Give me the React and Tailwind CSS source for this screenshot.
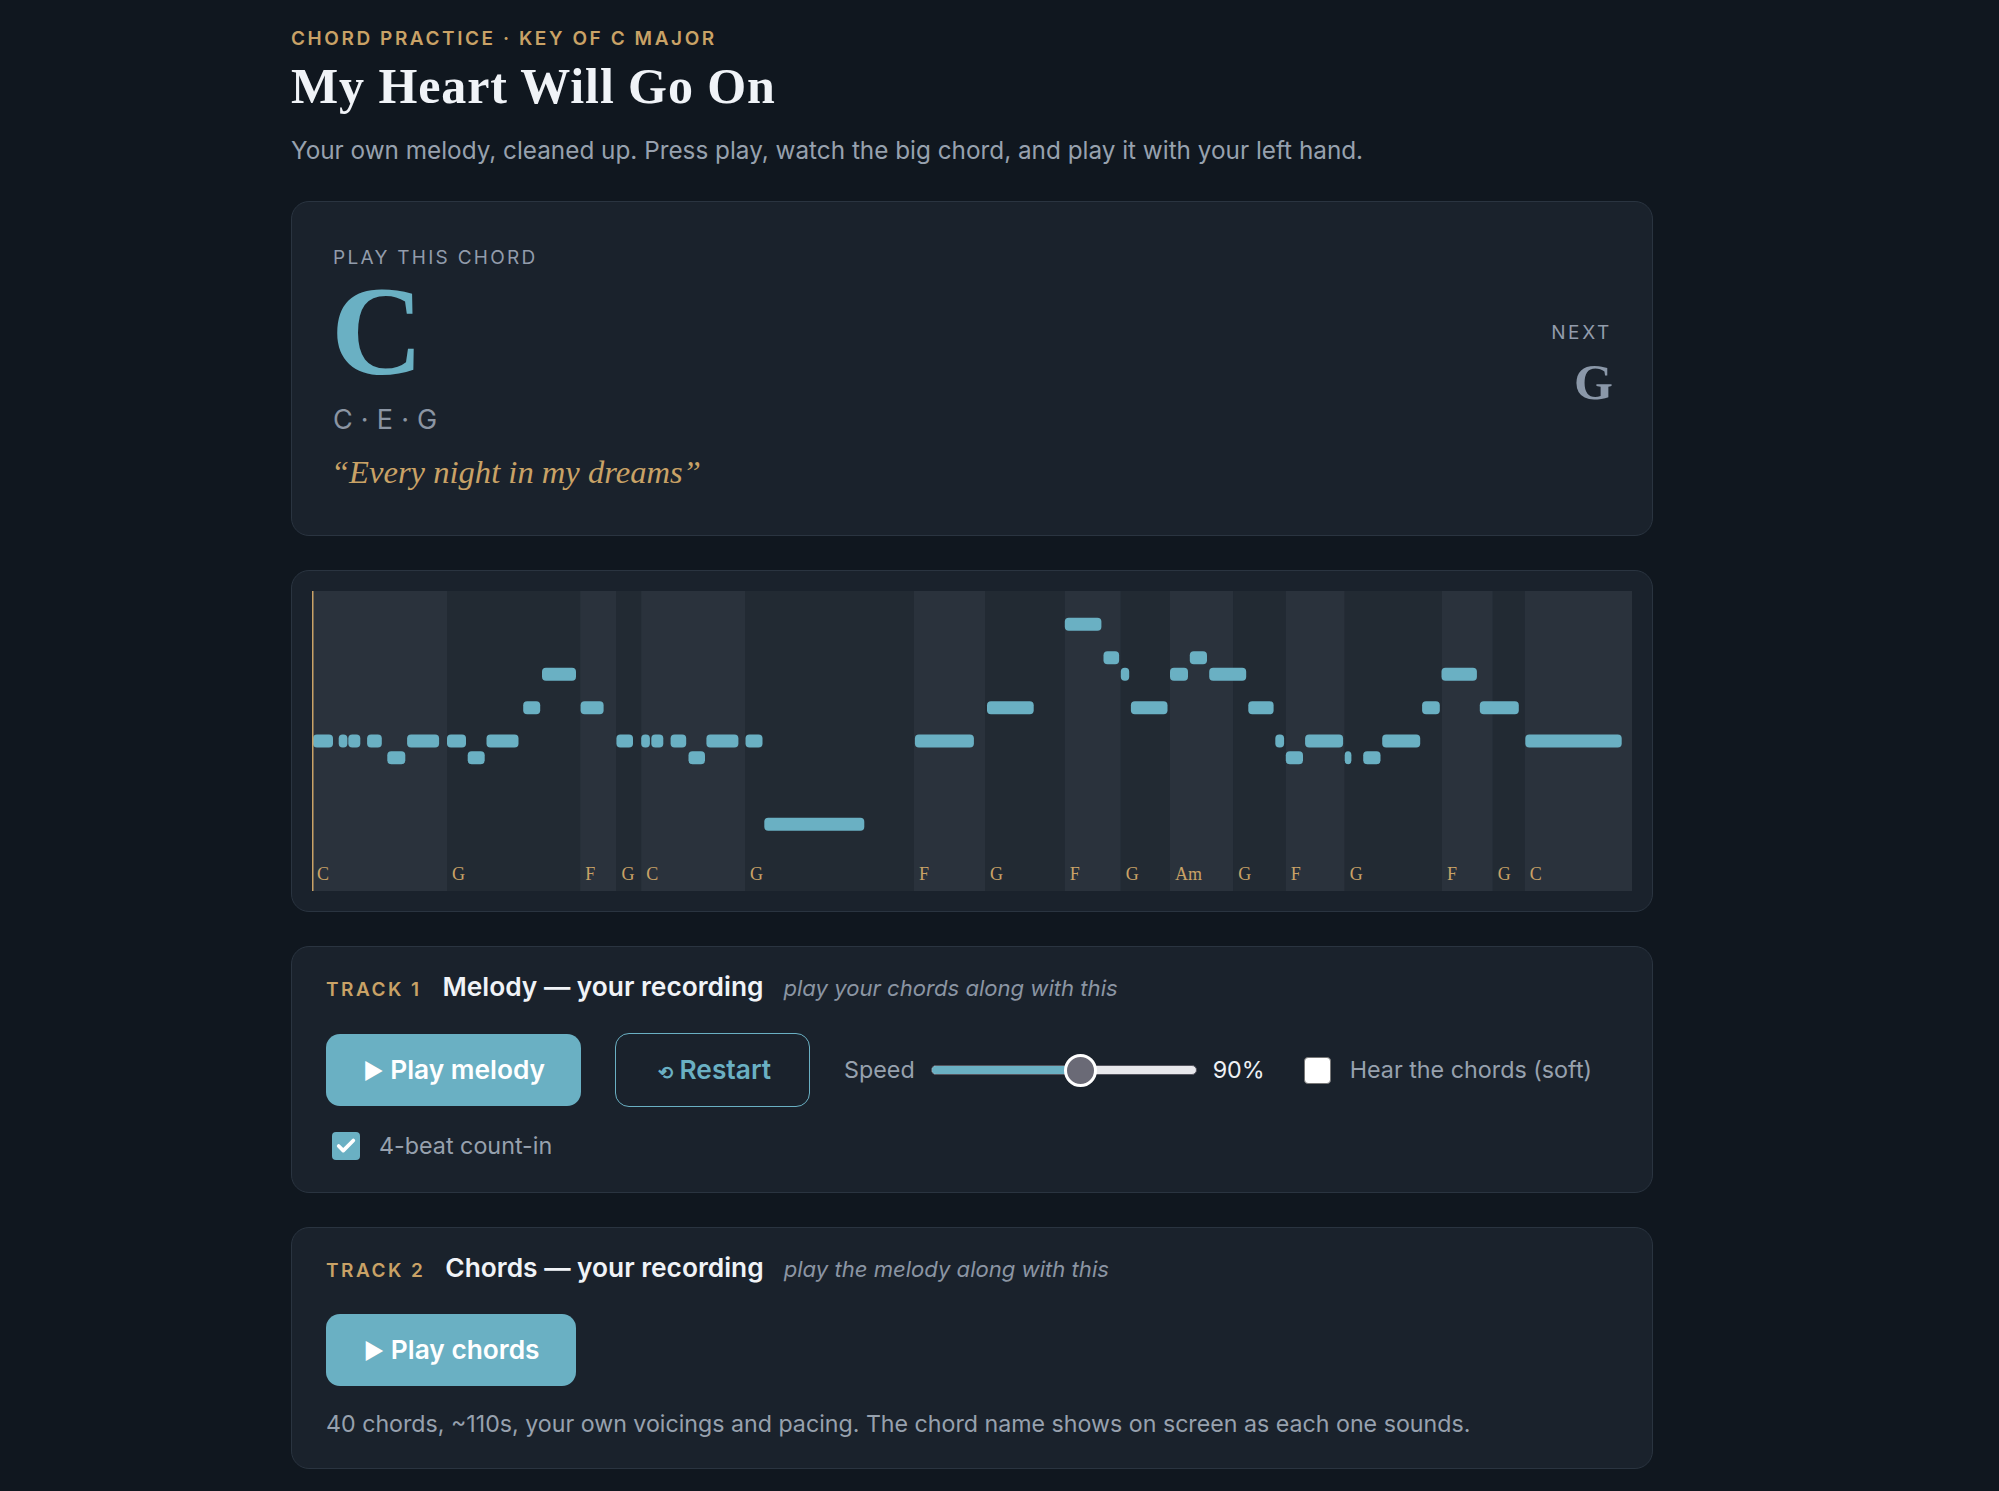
import { Check } from 'lucide-react';

const bands = [
  ['C', 0, 135], ['G', 135, 268.2], ['F', 268.2, 304.4], ['G', 304.4, 329.2], ['C', 329.2, 433],
  ['G', 433, 602], ['F', 602, 673], ['G', 673, 752.8], ['F', 752.8, 808.8], ['G', 808.8, 858],
  ['Am', 858, 921.2], ['G', 921.2, 973.8], ['F', 973.8, 1032.7], ['G', 1032.7, 1130],
  ['F', 1130, 1180.8], ['G', 1180.8, 1212.8], ['C', 1212.8, 1320],
];

// x, width, row centre
const notes = [
  [1, 20, 150], [26.7, 8.7, 150], [36.3, 12, 150], [55.1, 14.7, 150], [95.1, 32, 150], [135, 19, 150],
  [174.5, 32, 150], [304.4, 16.6, 150], [329.2, 8.7, 150], [339.3, 12, 150], [358.6, 15.6, 150],
  [394.4, 32, 150], [433.5, 17, 150], [602.9, 59, 150],
  [75.3, 18, 166.7], [155.7, 17, 166.7], [376.5, 16.5, 166.7],
  [211.2, 17, 116.7], [268.6, 23, 116.7], [675, 46.7, 116.7],
  [230, 34, 83.3], [452.3, 100, 233.3],
  [752.8, 36.6, 33.3], [791.5, 15.6, 66.7], [877.8, 17.2, 66.7],
  [808.8, 8.4, 83.3], [858, 18, 83.3], [897.2, 37, 83.3], [1129.5, 35.4, 83.3],
  [818.9, 36.6, 116.7], [936.3, 25.3, 116.7], [1110.1, 17.7, 116.7], [1167.8, 39, 116.7],
  [963.3, 8.8, 150], [993.1, 38, 150], [1070.2, 38, 150], [1213.3, 96.4, 150],
  [973.8, 17.2, 166.7], [1032.7, 6.7, 166.7], [1051.2, 17.3, 166.7],
];

function PianoRoll() {
  return (
    <svg width="1320" height="300" viewBox="0 0 1320 300" className="block">
      <rect width="1320" height="300" fill="#222a33" />
      {bands.map(([name, start, end], i) => (
        <rect key={i} x={start} y="0" width={end - start} height="300" fill={i % 2 === 0 ? '#2a323c' : '#222a33'} />
      ))}
      {notes.map(([x, w, y], i) => (
        <rect key={i} x={x} y={y - 6.5} width={w} height="13" rx="4" fill="#6ab0c3" />
      ))}
      {bands.map(([name, start], i) => (
        <text key={i} x={start + 5} y="289" fill="#c9a266" fontSize="18" fontFamily="'Liberation Serif', serif">{name}</text>
      ))}
      <rect x="0" y="0" width="1.5" height="300" fill="#c9a266" />
    </svg>
  );
}

function TrackHeader({ track, title, note, gap }) {
  return (
    <div className="flex items-baseline mb-[28px] leading-[30px]">
      <span className="text-[19px] font-semibold tracking-[0.13em] text-[#c9a266]">{track}</span>
      <span className={`text-[26.3px] font-semibold text-[#f0f3f7] ${gap}`}>{title}</span>
      <span className="ml-[20px] text-[22.1px] italic text-[#8b95a3]">{note}</span>
    </div>
  );
}

export default function App() {
  return (
    <div className="min-h-screen bg-[#10171f] font-['Inter',sans-serif] pt-[27px] pb-[22px]">
      <div className="ml-[291px] w-[1362px]">
        <div className="text-[19px] leading-[24px] font-semibold tracking-[0.135em] text-[#c9a266]">
          CHORD PRACTICE · KEY OF C MAJOR
        </div>
        <h1 className="mt-[7px] font-['Liberation_Serif',serif] text-[50px] leading-[56px] font-bold tracking-[0.9px] text-[#f0f3f7]">
          My Heart Will Go On
        </h1>
        <p className="mt-[20px] text-[24.3px] leading-[32px] text-[#97a1ae]">
          Your own melody, cleaned up. Press play, watch the big chord, and play it with your left hand.
        </p>

        <section className="mt-[35px] h-[335px] rounded-[18px] border border-[#2a3440] bg-[#1a222c] px-[41px] flex items-center justify-between">
          <div className="mt-[1px]">
            <div className="text-[19px] leading-[24px] tracking-[0.12em] text-[#929cab]">PLAY THIS CHORD</div>
            <div className="ml-[-2px] font-['Liberation_Serif',serif] text-[128px] leading-[112px] mt-[5px] font-bold text-[#6ab0c3]">C</div>
            <div className="mt-[17px] text-[27px] leading-[32px] tracking-[0.01em] text-[#8b95a3]">C · E · G</div>
            <div className="ml-[-2px] mt-[16px] font-['Liberation_Serif',serif] text-[32.6px] leading-[40px] italic text-[#c9a266]">
              “Every night in my dreams”
            </div>
          </div>
          <div className="mb-[7px] text-right">
            <div className="mr-[-1px] text-[19px] leading-[24px] tracking-[0.14em] text-[#929cab]">NEXT</div>
            <div className="mt-[10px] mr-[-2px] font-['Liberation_Serif',serif] text-[50px] leading-[54px] font-bold text-[#8b98a9]">G</div>
          </div>
        </section>

        <section className="mt-[34px] rounded-[18px] border border-[#2a3440] bg-[#1a222c] p-5">
          <PianoRoll />
        </section>

        <section className="mt-[34px] rounded-[18px] border border-[#2a3440] bg-[#1a222c] px-[34px] pt-[25px] pb-[32px]">
          <TrackHeader track="TRACK 1" title="Melody — your recording" note="play your chords along with this" gap="ml-[21px]" />
          <div className="flex flex-wrap items-center gap-x-[34px] gap-y-[25px]">
            <button className="h-[72px] w-[255px] rounded-[14px] bg-[#6ab0c3] pl-[1px] text-[26.3px] font-semibold text-white">
              <span className="text-[22px]">▶</span> Play melody
            </button>
            <button className="h-[74px] w-[195px] rounded-[14px] border-[1.5px] border-[#6ab0c3] pl-[4px] text-[26.3px] font-semibold text-[#6ab0c3]">
              <span className="text-[18px]">⟲</span> Restart
            </button>
            <div className="flex items-center gap-[16px] text-[23.3px] text-[#97a1ae]">
              <span>Speed</span>
              <div className="relative h-[10px] w-[266px] rounded-full bg-[#e8e8ec] border border-[#55555f]">
                <div className="h-full w-[52%] rounded-full bg-[#6ab0c3]" />
                <div className="absolute left-[132px] top-[-12px] h-[33px] w-[33px] rounded-full border-[3px] border-white bg-[#6a6a76]" />
              </div>
              <span className="text-[#eef1f5]">90%</span>
            </div>
            <label className="ml-[5px] flex items-center gap-[19px] text-[23.3px] text-[#97a1ae]">
              <span className="h-[27px] w-[27px] rounded-[4px] border border-[#777] bg-white" />
              Hear the chords (soft)
            </label>
            <label className="ml-[6px] flex items-center gap-[19px] text-[23.3px] leading-[28px] text-[#97a1ae]">
              <span className="flex h-[28px] w-[28px] items-center justify-center rounded-[4px] bg-[#6ab0c3]">
                <Check className="h-[22px] w-[22px] text-white" strokeWidth={4} />
              </span>
              4-beat count-in
            </label>
          </div>
        </section>

        <section className="mt-[34px] rounded-[18px] border border-[#2a3440] bg-[#1a222c] px-[34px] pt-[25px] pb-[30px]">
          <TrackHeader track="TRACK 2" title="Chords — your recording" note="play the melody along with this" gap="ml-[20px]" />
          <button className="h-[72px] w-[250px] rounded-[14px] bg-[#6ab0c3] pl-[1px] text-[26.3px] font-semibold text-white">
            <span className="text-[22px]">▶</span> Play chords
          </button>
          <p className="mt-[24px] text-[23.2px] leading-[28px] text-[#97a1ae]">
            40 chords, ~110s, your own voicings and pacing. The chord name shows on screen as each one sounds.
          </p>
        </section>
      </div>
    </div>
  );
}
